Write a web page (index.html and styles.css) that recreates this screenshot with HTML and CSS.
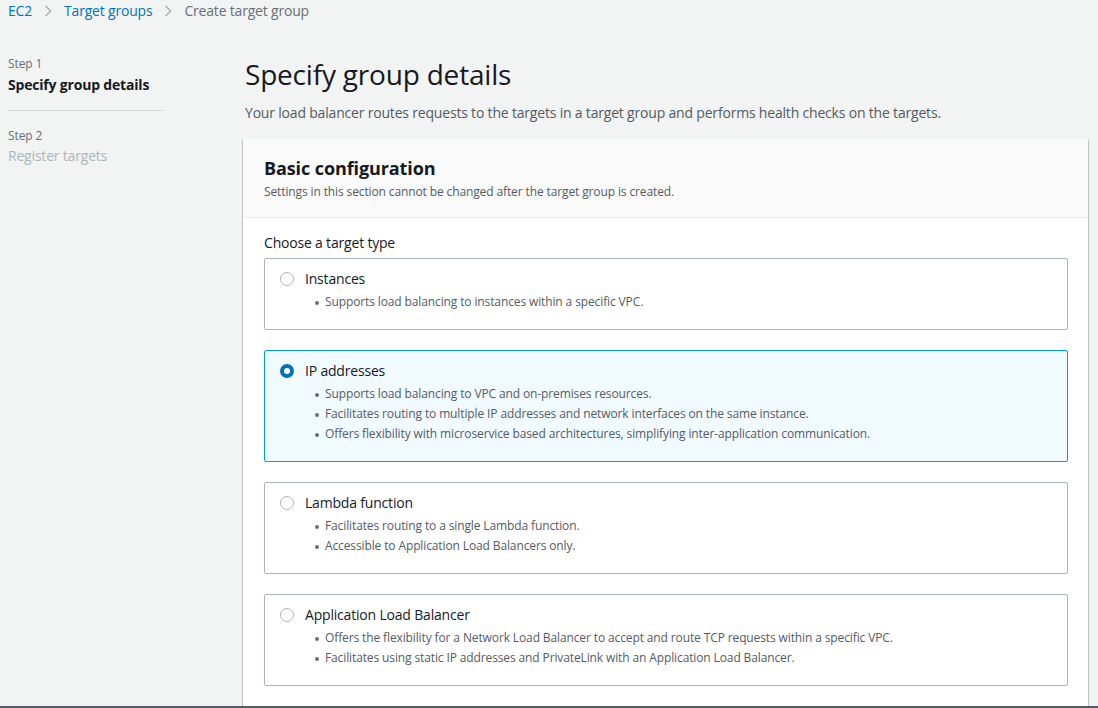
FILE: index.html
```html
<!DOCTYPE html>
<html lang="en">
<head>
<meta charset="utf-8">
<title>Create target group</title>
<link rel="stylesheet" href="styles.css">
</head>
<body>
<nav class="breadcrumbs">
  <a class="crumb link" href="#">EC2</a>
  <svg class="chev" viewBox="0 0 16 16" width="16" height="16"><path d="M5 2l6 6-6 6" fill="none" stroke="currentColor" stroke-width="2"/></svg>
  <a class="crumb link" href="#">Target groups</a>
  <svg class="chev" viewBox="0 0 16 16" width="16" height="16"><path d="M5 2l6 6-6 6" fill="none" stroke="currentColor" stroke-width="2"/></svg>
  <span class="crumb current">Create target group</span>
</nav>
<div class="layout">
  <aside class="steps">
    <div class="step">
      <div class="step-num">Step 1</div>
      <div class="step-title active">Specify group details</div>
    </div>
    <div class="step-divider"></div>
    <div class="step">
      <div class="step-num">Step 2</div>
      <div class="step-title disabled">Register targets</div>
    </div>
  </aside>
  <main class="main">
    <h1 class="page-title">Specify group details</h1>
    <p class="page-desc">Your load balancer routes requests to the targets in a target group and performs health checks on the targets.</p>
    <section class="container">
      <header class="container-header">
        <h2 class="container-title">Basic configuration</h2>
        <p class="container-desc">Settings in this section cannot be changed after the target group is created.</p>
      </header>
      <div class="container-body">
        <div class="field-label">Choose a target type</div>
        <div class="tiles">
          <label class="tile">
            <span class="tile-head"><span class="radio"></span><span class="tile-label">Instances</span></span>
            <ul class="bullets">
              <li>Supports load balancing to instances within a specific VPC.</li>
            </ul>
          </label>
          <label class="tile selected">
            <span class="tile-head"><span class="radio checked"></span><span class="tile-label">IP addresses</span></span>
            <ul class="bullets">
              <li>Supports load balancing to VPC and on-premises resources.</li>
              <li>Facilitates routing to multiple IP addresses and network interfaces on the same instance.</li>
              <li>Offers flexibility with microservice based architectures, simplifying inter-application communication.</li>
            </ul>
          </label>
          <label class="tile">
            <span class="tile-head"><span class="radio"></span><span class="tile-label">Lambda function</span></span>
            <ul class="bullets">
              <li>Facilitates routing to a single Lambda function.</li>
              <li>Accessible to Application Load Balancers only.</li>
            </ul>
          </label>
          <label class="tile">
            <span class="tile-head"><span class="radio"></span><span class="tile-label">Application Load Balancer</span></span>
            <ul class="bullets">
              <li>Offers the flexibility for a Network Load Balancer to accept and route TCP requests within a specific VPC.</li>
              <li>Facilitates using static IP addresses and PrivateLink with an Application Load Balancer.</li>
            </ul>
          </label>
        </div>
      </div>
    </section>
  </main>
</div>
<div class="footer-line"></div>
</body>
</html>
```
FILE: styles.css
```css
* { box-sizing: border-box; }
html, body { margin: 0; padding: 0; }
body {
  background: #f2f3f3;
  font-family: "Open Sans", "Noto Sans", sans-serif;
  color: #16191f;
  font-size: 14px;
  line-height: 20px;
  letter-spacing: -0.19px;
  height: 708px;
  overflow: hidden;
}
.breadcrumbs {
  display: flex;
  align-items: center;
  height: 22px;
  padding-left: 8px;
  gap: 9px;
  font-size: 14px;
}
.crumb { text-decoration: none; }
.link { color: #0073bb; }
.current { color: #687078; }
.chev { color: #aab7b8; width: 14px; height: 14px; }
.layout {
  display: flex;
  padding-top: 34px;
}
.steps {
  width: 164px;
  padding-left: 8px;
  flex: none;
}
.step-num {
  font-size: 12px;
  line-height: 16px;
  color: #687078;
  letter-spacing: -0.1px;
}
.step-title {
  margin-top: 3px;
  font-size: 14px;
  line-height: 20px;
}
.step-title.active { font-weight: 700; color: #16191f; }
.step-title.disabled { color: #aab7b8; margin-top: 2px; }
.step-divider {
  height: 1px;
  background: #d5dbdb;
  margin: 15px 0 17px;
}
.main {
  margin-left: 79px;
  width: 845px;
  flex: none;
}
.page-title {
  margin: 0 0 0 2px;
  font-size: 28px;
  line-height: 36px;
  font-weight: 400;
  color: #16191f;
  letter-spacing: -0.2px;
}
.page-desc {
  margin: 11px 0 0 2px;
  color: #545b64;
}
.container {
  margin-top: 16px;
  background: #fff;
  box-shadow: 0 1px 1px 0 rgba(0, 28, 36, 0.3), 1px 1px 1px 0 rgba(0, 28, 36, 0.15), -1px 1px 1px 0 rgba(0, 28, 36, 0.15);
}
.container-header {
  background: #fafafa;
  border-bottom: 1px solid #eaeded;
  padding: 17px 20px 17px 21px;
}
.container-title {
  margin: 0;
  font-size: 18px;
  line-height: 24px;
  font-weight: 700;
  letter-spacing: -0.1px;
}
.container-desc {
  margin: 4px 0 0;
  font-size: 12px;
  line-height: 16px;
  color: #545b64;
  letter-spacing: -0.12px;
}
.container-body {
  padding: 15px 20px 20px 21px;
}
.field-label {
  line-height: 20px;
  margin-bottom: 5px;
}
.tiles {
  display: flex;
  flex-direction: column;
  gap: 20px;
}
.tile {
  display: block;
  border: 1px solid #aab7b8;
  border-radius: 2px;
  padding: 10px 15px 17px;
  background: #fff;
}
.tile.selected {
  background: #f1faff;
  border-color: #00a1c9;
}
.tile-head {
  display: flex;
  align-items: center;
  height: 20px;
}
.radio {
  width: 14px;
  height: 14px;
  border-radius: 50%;
  border: 1px solid #aab7b8;
  background: #fff;
  flex: none;
}
.radio.checked {
  border: 4px solid #0073bb;
}
.tile-label {
  margin-left: 11px;
  color: #16191f;
}
.bullets {
  list-style: none;
  margin: 3px 0 0 0;
  padding: 0 0 0 45px;
}
.bullets li {
  position: relative;
  font-size: 12px;
  line-height: 20px;
  color: #545b64;
  letter-spacing: -0.12px;
}
.bullets li::before {
  content: "";
  position: absolute;
  left: -10px;
  top: 9px;
  width: 4px;
  height: 4px;
  border-radius: 50%;
  background: #687078;
}
.footer-line {
  position: fixed;
  left: 0;
  right: 0;
  bottom: 0;
  height: 2px;
  background: #545b64;
}
```
